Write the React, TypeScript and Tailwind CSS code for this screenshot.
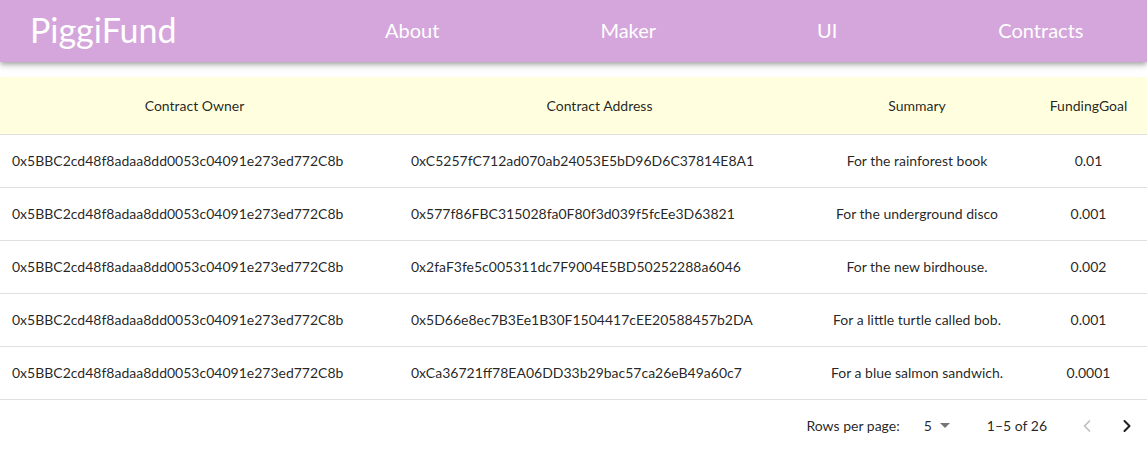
import { ChevronLeft, ChevronRight } from "lucide-react";

const rows = [
  {
    owner: "0x5BBC2cd48f8adaa8dd0053c04091e273ed772C8b",
    address: "0xC5257fC712ad070ab24053E5bD96D6C37814E8A1",
    summary: "For the rainforest book",
    goal: "0.01",
  },
  {
    owner: "0x5BBC2cd48f8adaa8dd0053c04091e273ed772C8b",
    address: "0x577f86FBC315028fa0F80f3d039f5fcEe3D63821",
    summary: "For the underground disco",
    goal: "0.001",
  },
  {
    owner: "0x5BBC2cd48f8adaa8dd0053c04091e273ed772C8b",
    address: "0x2faF3fe5c005311dc7F9004E5BD50252288a6046",
    summary: "For the new birdhouse.",
    goal: "0.002",
  },
  {
    owner: "0x5BBC2cd48f8adaa8dd0053c04091e273ed772C8b",
    address: "0x5D66e8ec7B3Ee1B30F1504417cEE20588457b2DA",
    summary: "For a little turtle called bob.",
    goal: "0.001",
  },
  {
    owner: "0x5BBC2cd48f8adaa8dd0053c04091e273ed772C8b",
    address: "0xCa36721ff78EA06DD33b29bac57ca26eB49a60c7",
    summary: "For a blue salmon sandwich.",
    goal: "0.0001",
  },
];

const navItems = ["About", "Maker", "UI", "Contracts"];

export default function App() {
  return (
    <div className="min-h-screen bg-white font-['Lato',sans-serif] text-[rgba(0,0,0,0.87)]">
      {/* Top bar */}
      <header className="h-[62px] bg-[#d4a6dc] flex items-center shadow-[0_2px_4px_-1px_rgba(0,0,0,0.2),0_4px_5px_0_rgba(0,0,0,0.14),0_1px_10px_0_rgba(0,0,0,0.12)] relative z-10">
        <div className="w-[385px] pl-[30px] text-[34px] text-white leading-none pb-[2px]">PiggiFund</div>
        <nav className="flex gap-[161px] text-[20px] text-white">
          {navItems.map((item) => (
            <div key={item} className="pb-[2px]">
              {item}
            </div>
          ))}
        </nav>
      </header>

      <div className="pt-[15px]">
        <table className="w-full border-collapse text-[14px] table-fixed">
          <colgroup>
            <col className="w-[399px]" />
            <col className="w-[405px]" />
            <col className="w-[226px]" />
            <col className="w-[117px]" />
          </colgroup>
          <thead>
            <tr className="bg-[#ffffe0]">
              <th className="h-[57px] pr-[10px] font-normal text-center border-b border-[#e0e0e0] leading-6 pt-[1px]">Contract Owner</th>
              <th className="pr-[4px] font-normal text-center border-b border-[#e0e0e0] leading-6 pt-[1px]">Contract Address</th>
              <th className="font-normal text-center border-b border-[#e0e0e0] leading-6 pt-[1px]">Summary</th>
              <th className="font-normal text-center border-b border-[#e0e0e0] leading-6 pt-[1px]">FundingGoal</th>
            </tr>
          </thead>
          <tbody>
            {rows.map((r) => (
              <tr key={r.address}>
                <td className="h-[53px] pl-[12px] border-b border-[#e0e0e0] leading-5">{r.owner}</td>
                <td className="pl-[12px] border-b border-[#e0e0e0] leading-5">{r.address}</td>
                <td className="text-center border-b border-[#e0e0e0] leading-5">{r.summary}</td>
                <td className="text-center border-b border-[#e0e0e0] leading-5">{r.goal}</td>
              </tr>
            ))}
          </tbody>
        </table>

        {/* Pagination */}
        <div className="h-[52px] flex items-center justify-end text-[14px]">
          <span className="mr-[24px]">Rows per page:</span>
          <div className="flex items-center mr-[37px]">
            <span>5</span>
            <svg className="ml-[8px] text-[rgba(0,0,0,0.54)]" width="10" height="5" viewBox="0 0 10 5">
              <path d="M0 0l5 5 5-5z" fill="currentColor" />
            </svg>
          </div>
          <span className="mr-[30px]">1–5 of 26</span>
          <div className="flex items-center gap-[20px] mr-[10px]">
            <ChevronLeft className="w-[20px] h-[20px] text-[rgba(0,0,0,0.26)]" strokeWidth={2} />
            <ChevronRight className="w-[20px] h-[20px] text-[rgba(0,0,0,0.87)]" strokeWidth={2.5} />
          </div>
        </div>
      </div>
    </div>
  );
}
